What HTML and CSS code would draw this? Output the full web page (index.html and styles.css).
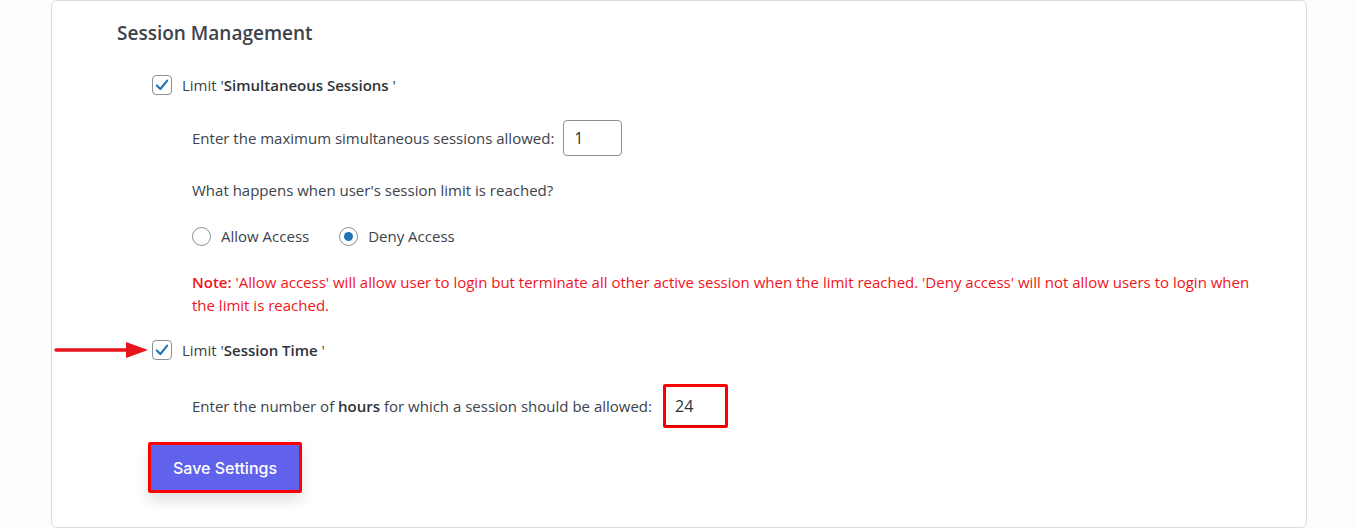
FILE: index.html
```html
<!DOCTYPE html>
<html lang="en">
<head>
    <meta charset="UTF-8">
    <meta name="viewport" content="width=device-width, initial-scale=1.0">
    <title>Session Management</title>
    <link rel="stylesheet" href="styles.css">
</head>
<body>
    <div class="card">
        <h2>Session Management</h2>

        <div class="check-row">
            <span class="checkbox checked">
                <svg viewBox="0 0 20 20" width="16" height="16"><path d="M3.5 10.5 L8 15 L16.5 4.5" fill="none" stroke="#2271b1" stroke-width="2.6" stroke-linecap="round" stroke-linejoin="round"/></svg>
            </span>
            <span class="label">Limit '<b>Simultaneous Sessions </b>'</span>
        </div>

        <div class="sub">
            <div class="field-row">
                <span>Enter the maximum simultaneous sessions allowed:</span>
                <span class="text-input small">1</span>
            </div>

            <p class="question">What happens when user's session limit is reached?</p>

            <div class="radio-row">
                <span class="radio"></span>
                <span class="radio-label">Allow Access</span>
                <span class="radio checked"></span>
                <span class="radio-label">Deny Access</span>
            </div>

            <p class="note"><b>Note:</b> 'Allow access' will allow user to login but terminate all other active session when the limit reached. 'Deny access' will not allow users to login when the limit is reached.</p>
        </div>

        <div class="check-row second">
            <span class="arrow">
                <svg viewBox="0 0 96 20" width="96" height="20"><path d="M2 10 H76" stroke="#e8141c" stroke-width="3.5" stroke-linecap="round"/><path d="M72 2 L94 10 L72 18 Z" fill="#e8141c"/></svg>
            </span>
            <span class="checkbox checked">
                <svg viewBox="0 0 20 20" width="16" height="16"><path d="M3.5 10.5 L8 15 L16.5 4.5" fill="none" stroke="#2271b1" stroke-width="2.6" stroke-linecap="round" stroke-linejoin="round"/></svg>
            </span>
            <span class="label">Limit '<b>Session Time </b>'</span>
        </div>

        <div class="sub">
            <div class="field-row hours">
                <span>Enter the number of <b>hours</b> for which a session should be allowed:</span>
                <span class="highlight"><span class="text-input">24</span></span>
            </div>
        </div>

        <div class="highlight button-wrap">
            <button class="save">Save Settings</button>
        </div>
    </div>
</body>
</html>
```

FILE: styles.css
```css
body {
    margin: 0;
    background-color: #fdfdfd;
    font-family: "Open Sans", "Noto Sans", sans-serif;
    font-size: 15px;
    color: #3c434a;
}
.card {
    margin-left: 51px;
    width: 1256px;
    height: 528px;
    box-sizing: border-box;
    background-color: #fff;
    border: 1px solid #dcdcde;
    border-radius: 6px;
    padding: 19px 0 0 65px;
}
h2 {
    margin: 0;
    font-size: 19px;
    font-weight: 600;
    color: #3c434a;
    line-height: 26px;
}
.check-row {
    display: flex;
    align-items: center;
    gap: 10px;
    margin: 28px 0 0 35px;
    height: 22px;
    position: relative;
}
.check-row.second {
    margin-top: 22px;
}
.checkbox {
    width: 18px;
    height: 18px;
    border: 1px solid #8c8f94;
    border-radius: 4px;
    display: flex;
    align-items: center;
    justify-content: center;
    background: #fff;
}
.label b {
    font-weight: 600;
    color: #2c3338;
}
.arrow {
    position: absolute;
    left: -98px;
    top: 1px;
    line-height: 0;
}
.sub {
    margin-left: 75px;
}
.field-row {
    display: flex;
    align-items: center;
    gap: 9px;
    margin-top: 24px;
}
.field-row b {
    font-weight: 600;
    color: #2c3338;
}
.text-input {
    display: inline-block;
    box-sizing: border-box;
    width: 59px;
    height: 36px;
    border: 1px solid #8c8f94;
    border-radius: 4px;
    padding: 0 10px;
    font-size: 16px;
    line-height: 34px;
    color: #2c3338;
    background: #fff;
}
.highlight {
    border: 3px solid #ff0000;
    border-radius: 2px;
    display: inline-block;
    line-height: 0;
}
.hours {
    margin-top: 23px;
}
.hours .highlight {
    margin-left: 2px;
}
.hours .text-input {
    width: 59px;
    height: 38px;
    border: none;
    border-radius: 0;
    padding: 0 9px;
    line-height: 38px;
    box-shadow: 0 1px 2px rgba(0, 0, 0, 0.25);
}
.question {
    margin: 23px 0 0;
    line-height: 22px;
}
.radio-row {
    display: flex;
    align-items: center;
    margin-top: 24px;
    height: 22px;
}
.radio {
    width: 17px;
    height: 17px;
    border: 1px solid #8c8f94;
    border-radius: 50%;
    display: flex;
    align-items: center;
    justify-content: center;
    margin-right: 10px;
}
.radio.checked::after {
    content: "";
    width: 9px;
    height: 9px;
    border-radius: 50%;
    background: #2271b1;
}
.radio-label {
    margin-right: 30px;
}
.note {
    margin: 24px 0 0;
    color: #f0141c;
    line-height: 23px;
    max-width: 1065px;
}
.note b {
    font-weight: 600;
}
.button-wrap {
    margin: 14px 0 0 31px;
    box-shadow: 0 8px 14px rgba(0, 0, 0, 0.12);
}
.save {
    width: 148px;
    height: 45px;
    border: none;
    background-color: #6062ec;
    color: #fff;
    font-family: "Inter", "Lato", sans-serif;
    font-size: 16px;
    font-weight: 500;
    padding: 0;
    cursor: pointer;
}
```
